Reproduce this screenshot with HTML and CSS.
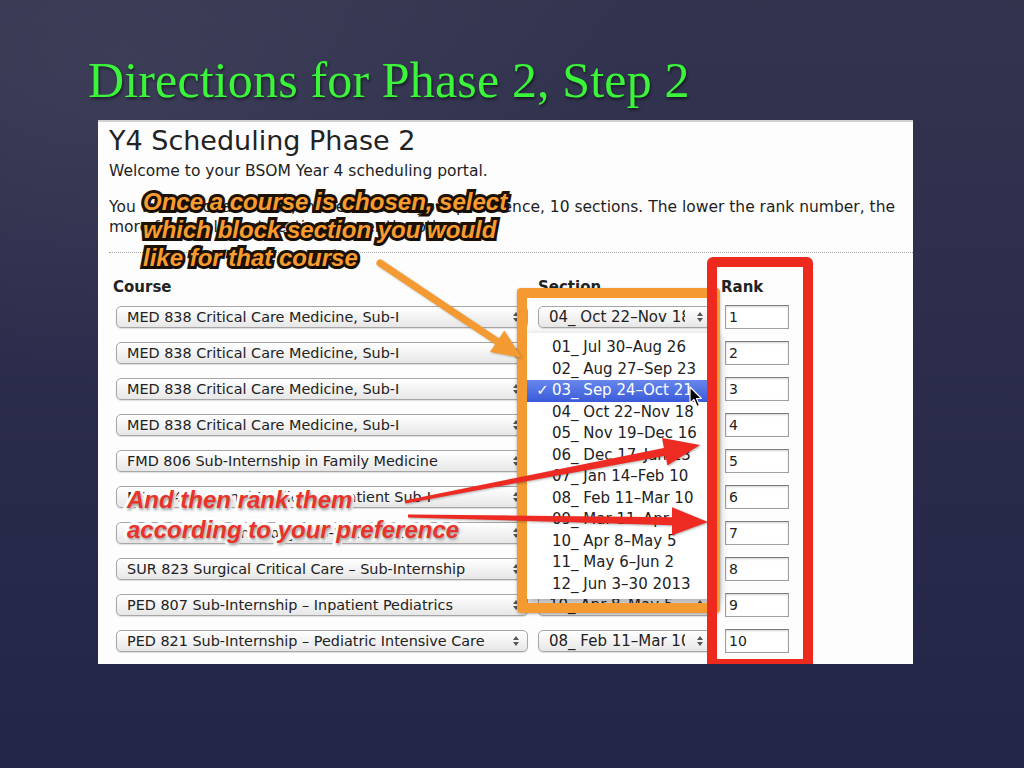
FILE: index.html
```html
<!DOCTYPE html>
<html lang="en">
<head>
<meta charset="utf-8">
<title>Directions for Phase 2, Step 2</title>
<link rel="stylesheet" href="styles.css">
</head>
<body>
<main class="slide">
  <h1 class="slide-title">Directions for Phase 2, Step 2</h1>
  <section class="shot">
    <h2 class="portal-title">Y4 Scheduling Phase 2</h2>
    <p class="welcome">Welcome to your BSOM Year 4 scheduling portal.</p>
    <p class="intro"><span class="intro-line">You will select and rank, in the order of your prefere<span>nce, 10 sections. The lower the rank number, the</span></span><span class="intro-line">more favorable that section is over the others.</span></p>
    <hr class="rule">
    <div class="form-head">
      <div class="hdr hdr-course">Course</div>
      <div class="hdr hdr-section">Section</div>
      <div class="hdr hdr-rank">Rank</div>
    </div>
    <div class="form-rows">
      <div class="sel sel-course"><span>MED 838 Critical Care Medicine, Sub-I</span></div>
      <div class="sel sel-section"><span>04_ Oct 22–Nov 18</span></div>
      <div class="rank">1</div>

      <div class="sel sel-course"><span>MED 838 Critical Care Medicine, Sub-I</span></div>
      <div class="sel sel-section"><span>05_ Nov 19–Dec 16</span></div>
      <div class="rank">2</div>

      <div class="sel sel-course"><span>MED 838 Critical Care Medicine, Sub-I</span></div>
      <div class="sel sel-section"><span>03_ Sep 24–Oct 21</span></div>
      <div class="rank">3</div>

      <div class="sel sel-course"><span>MED 838 Critical Care Medicine, Sub-I</span></div>
      <div class="sel sel-section"><span>06_ Dec 17–Jan 13</span></div>
      <div class="rank">4</div>

      <div class="sel sel-course"><span>FMD 806 Sub-Internship in Family Medicine</span></div>
      <div class="sel sel-section"><span>02_ Aug 27–Sep 23</span></div>
      <div class="rank">5</div>

      <div class="sel sel-course"><span>MED 846 Internal Medicine Inpatient Sub-I</span></div>
      <div class="sel sel-section"><span>07_ Jan 14–Feb 10</span></div>
      <div class="rank">6</div>

      <div class="sel sel-course"><span>OBG 812 Gyn Oncology Sub-Internship</span></div>
      <div class="sel sel-section"><span>09_ Mar 11–Apr 7</span></div>
      <div class="rank">7</div>

      <div class="sel sel-course"><span>SUR 823 Surgical Critical Care – Sub-Internship</span></div>
      <div class="sel sel-section"><span>01_ Jul 30–Aug 26</span></div>
      <div class="rank">8</div>

      <div class="sel sel-course"><span>PED 807 Sub-Internship – Inpatient Pediatrics</span></div>
      <div class="sel sel-section"><span>10_ Apr 8–May 5</span></div>
      <div class="rank">9</div>

      <div class="sel sel-course"><span>PED 821 Sub-Internship – Pediatric Intensive Care</span></div>
      <div class="sel sel-section"><span>08_ Feb 11–Mar 10</span></div>
      <div class="rank">10</div>
    </div>

    <ul class="menu">
      <li class="menu-item">01_ Jul 30–Aug 26</li>
      <li class="menu-item">02_ Aug 27–Sep 23</li>
      <li class="menu-item is-active"><span class="menu-check">✓</span>03_ Sep 24–Oct 21</li>
      <li class="menu-item">04_ Oct 22–Nov 18</li>
      <li class="menu-item">05_ Nov 19–Dec 16</li>
      <li class="menu-item">06_ Dec 17–Jan 13</li>
      <li class="menu-item">07_ Jan 14–Feb 10</li>
      <li class="menu-item">08_ Feb 11–Mar 10</li>
      <li class="menu-item">09_ Mar 11–Apr 7</li>
      <li class="menu-item">10_ Apr 8–May 5</li>
      <li class="menu-item">11_ May 6–Jun 2</li>
      <li class="menu-item">12_ Jun 3–30 2013</li>
    </ul>

    <div class="hl hl-orange"></div>
    <div class="hl hl-red"></div>

    <svg class="arrows" width="815" height="544" viewBox="0 0 815 544" aria-hidden="true">
      <g class="arrow-orange">
        <line x1="282" y1="143" x2="400" y2="222" stroke="#f39a33" stroke-width="7" stroke-linecap="round"/>
        <polygon points="424,238 391.9,232.1 406.3,210.5" fill="#f39a33"/>
      </g>
      <g class="arrow-red">
        <polygon points="306.7,380.5 565.9,327.9 564.0,318.1 602,325 569.4,345.6 567.5,335.7 307.3,383.5" fill="#ee2b22"/>
        <polygon points="310,394.5 574,397.3 574,387.3 610,402 574,415.3 574,405.3 310,397.5" fill="#ee2b22"/>
      </g>
    </svg>

    <p class="callout callout-orange">Once a course is chosen, select<br>which block section you would<br>like for that course</p>
    <p class="callout callout-red">And then rank them<br>according to your preference</p>

    <svg class="cursor" width="14" height="22" viewBox="0 0 14 22" aria-hidden="true">
      <path d="M1 1 L1 17 L5 13.5 L8 20.5 L10.5 19.5 L7.5 12.5 L12.5 12.5 Z" fill="#000" stroke="#fff" stroke-width="1.2" stroke-linejoin="round"/>
    </svg>
  </section>
</main>
</body>
</html>
```

FILE: styles.css
```css
* { box-sizing: border-box; }

html, body {
  margin: 0;
  padding: 0;
}

body {
  width: 1024px;
  height: 768px;
  overflow: hidden;
  background: linear-gradient(180deg, #33344e 0%, #2c2d4c 45%, #232548 100%);
  font-family: "DejaVu Sans", sans-serif;
}

.slide {
  width: 1024px;
  height: 768px;
  padding-top: 52px;
  background: radial-gradient(ellipse 70% 60% at 12% 8%, rgba(80, 80, 105, 0.35), rgba(0, 0, 0, 0) 70%);
}

.slide-title {
  margin: 0 0 12px 88px;
  font: 400 50px/56px "Liberation Serif", serif;
  letter-spacing: 0.15px;
  color: #3af53a;
  text-shadow: 1px 2px 3px rgba(0, 0, 0, 0.55);
  white-space: nowrap;
}

.shot {
  position: relative;
  margin-left: 98px;
  width: 815px;
  height: 544px;
  padding: 5px 0 0 11px;
  background: #fdfdfd;
  box-shadow: inset 0 2px 0 #cfcfd4;
  overflow: hidden;
  color: #1e1e1e;
}

.portal-title {
  margin: 0;
  font: 400 27px/32px "DejaVu Sans", sans-serif;
  color: #222;
}

.welcome {
  margin: 4px 0 0;
  font-size: 15.5px;
  line-height: 20px;
}

.intro {
  margin: 16px 0 0;
  font-size: 15.5px;
  line-height: 20px;
  white-space: nowrap;
}

.intro-line { display: block; }

.rule {
  margin: 15px 0 0;
  height: 0;
  border: 0;
  border-top: 1px dotted #a8a8a8;
}

.form-head,
.form-rows {
  display: grid;
  grid-template-columns: 422px 187px 64px;
  margin-left: 7px;
  align-items: center;
}

.form-head { margin-top: 24px; }

.hdr {
  font-weight: 700;
  font-size: 15px;
  line-height: 20px;
  color: #222;
}

.hdr-course { margin-left: -3px; }
.hdr-rank { margin-left: -4px; }

.form-rows {
  margin-top: 8px;
  row-gap: 12px;
}

.sel {
  position: relative;
  height: 22px;
  padding: 0 24px 0 10px;
  border: 1px solid #a6a6a6;
  border-radius: 5px;
  background: linear-gradient(180deg, #ffffff 0%, #f3f3f3 50%, #e7e7e7 100%);
  box-shadow: 0 1px 1px rgba(0, 0, 0, 0.12);
  font-size: 14.4px;
  line-height: 20px;
  color: #222;
  white-space: nowrap;
}

.sel span {
  display: block;
  overflow: hidden;
}

.sel::before,
.sel::after {
  content: "";
  position: absolute;
  right: 8px;
  border-left: 3px solid transparent;
  border-right: 3px solid transparent;
}

.sel::before {
  top: 5px;
  border-bottom: 4px solid #555;
}

.sel::after {
  bottom: 5px;
  border-top: 4px solid #555;
}

.sel-course { width: 412px; }

.sel-section {
  width: 174px;
  padding-right: 26px;
  font-size: 15px;
}

.rank {
  width: 64px;
  height: 24px;
  padding-left: 3px;
  border: 1px solid #a0a0a0;
  border-top-color: #7d7d7d;
  background: #fff;
  box-shadow: inset 0 1px 2px rgba(0, 0, 0, 0.18);
  font-size: 14px;
  line-height: 22px;
  color: #222;
}

/* open dropdown */
.menu {
  position: absolute;
  left: 427px;
  top: 213px;
  width: 193px;
  height: 266px;
  margin: 0;
  padding: 4px 0 0;
  list-style: none;
  background: #fff;
  box-shadow: 0 4px 10px rgba(0, 0, 0, 0.35);
}

.menu-item {
  height: 21.5px;
  padding-left: 27px;
  font-size: 15px;
  line-height: 21.5px;
  color: #222;
  white-space: nowrap;
}

.menu-item.is-active {
  background: linear-gradient(180deg, #6787ec 0%, #3a5bd9 100%);
  color: #fff;
}

.menu-check {
  display: inline-block;
  width: 19px;
  margin-left: -19px;
  text-align: center;
}

/* highlight boxes */
.hl {
  position: absolute;
  border-style: solid;
  border-width: 10px;
}

.hl-orange {
  left: 419px;
  top: 168px;
  width: 203px;
  height: 325px;
  border-color: #f59a31;
  border-radius: 4px;
  box-shadow: 0 1px 3px rgba(0, 0, 0, 0.3);
}

.hl-red {
  left: 609px;
  top: 137px;
  width: 106px;
  height: 412px;
  border-color: #ee2a1e;
  border-radius: 6px;
}

.arrows {
  position: absolute;
  left: 0;
  top: 0;
  pointer-events: none;
}

.arrow-orange { filter: drop-shadow(1px 1px 1px rgba(0, 0, 0, 0.25)); }
.arrow-red { filter: drop-shadow(1px 1px 1px rgba(0, 0, 0, 0.3)); }

/* callouts */
.callout {
  position: absolute;
  margin: 0;
  font: italic 700 24px/28px "Liberation Sans", Arial, sans-serif;
  white-space: nowrap;
  paint-order: stroke fill;
}

.callout-orange {
  left: 45px;
  top: 68px;
  color: #f99c2f;
  -webkit-text-stroke: 6px #1c1206;
  text-shadow: 1px 2px 2px rgba(0, 0, 0, 0.5);
}

.callout-red {
  left: 29px;
  top: 365px;
  line-height: 30px;
  color: #e8332b;
  -webkit-text-stroke: 6px #ffffff;
  text-shadow: 1px 2px 3px rgba(0, 0, 0, 0.45);
}

.cursor {
  position: absolute;
  left: 591px;
  top: 266px;
}
```
